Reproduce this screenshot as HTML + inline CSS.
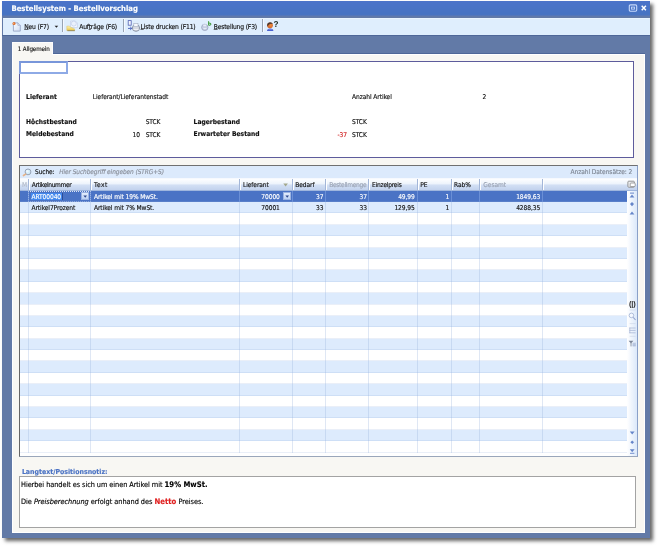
<!DOCTYPE html>
<html lang="de"><head><meta charset="utf-8"><title>Bestellsystem - Bestellvorschlag</title>
<style>
html,body{margin:0;padding:0;background:#fff;}
body{width:659px;height:547px;overflow:hidden;position:relative;font-family:"DejaVu Sans Condensed","Liberation Sans",sans-serif;font-size:6.6px;letter-spacing:-0.08px;color:#111;}
div,span{position:absolute;box-sizing:border-box;white-space:nowrap;}
.t{height:10px;line-height:10px;-webkit-text-stroke:0.14px;}
.t span,.t i,.t u,.t b{position:static;}
.t u{text-decoration-thickness:0.6px;text-underline-offset:0.4px;text-decoration-color:rgba(0,0,0,.55);}
.b{font-weight:bold;letter-spacing:0;}
#root{left:0;top:0;width:659px;height:547px;will-change:transform;filter:blur(0.35px);}
#win{left:2px;top:1.3px;width:648.4px;height:536.9px;background:#627aa7;box-shadow:3px 3px 3.6px rgba(0,0,0,.6);}
#title{left:2px;top:1.3px;width:648.4px;height:15.7px;background:linear-gradient(#4b73c9 0,#4673c2 13.4px,#5a78b4 15px,#627aa7 15.7px);}
#tb{left:3px;top:17.6px;width:647.4px;height:17.2px;background:#dfeefd;border-top:1px solid #e9f5ff;}
#tbline{left:2px;top:34.8px;width:648.4px;height:1px;background:#4e6798;}
#tab{left:12px;top:42.4px;width:41px;height:12.6px;background:#f8f7f3;border:1px solid #fdfdfd;border-bottom:none;}
#page{left:12px;top:54px;width:632.6px;height:478.8px;background:#f8f7f3;border:1px solid #fff;}
#pageline{left:53px;top:53.2px;width:592px;height:1px;background:#4e6798;}
#info{left:19.2px;top:61px;width:614.6px;height:96.6px;background:#fff;border:1px solid #5d5c9c;}
#inp{left:19.4px;top:61px;width:49px;height:12.8px;background:#fff;border:2px solid #8eaae6;border-top-color:#7896da;border-left-color:#7f9cde;}
#grid{left:19px;top:165.4px;width:619px;height:291.7px;background:#fff;border:1px solid #8aa0c8;border-bottom-color:#9aa6ba;border-left-color:#666;border-top-color:#707070}
#search{left:20px;top:166.4px;width:617px;height:11.6px;background:#dceafc;}
#hdr{left:20px;top:177.6px;width:617px;height:13px;background:linear-gradient(#fdfeff 0%,#eef4fc 42%,#d2dff4 56%,#c2d2ed 100%);border-top:1px solid #f6f9fe;border-bottom:1px solid #9fb6dd;}
#nav{left:626.6px;top:190.6px;width:10.4px;height:265.5px;background:linear-gradient(90deg,#fff,#dbe8fa);}
.row{left:20px;width:606.6px;}
.alt{background:#ddebfd;}
.sel{background:#4a73c5;}
.vl{width:1px;background:rgba(150,175,220,.3);top:202px;height:250.6px;}
.rl{left:20px;width:606.6px;height:1px;background:rgba(150,175,220,.2);}
.vs{width:1px;background:#6a8fd6;top:191px;height:11px;}
.hl{width:1px;background:#a3b6d8;top:179.4px;height:10.2px;box-shadow:1px 0 0 #fff;}
.dd{width:7.8px;height:8.2px;top:192.2px;background:linear-gradient(#e3edfc,#bcd1f4);border:0.6px solid #9cb4e2;}
#note{left:19.4px;top:476px;width:616.4px;height:51.6px;background:#fff;border:1px solid #a3a3a3;}
</style></head>
<body>
<div id="root">
<div id="win"></div><div id="title"></div><div id="tb"></div><div id="tbline"></div>
<div class="t b" style="top:4px;font-size:7.66px;left:11.4px;color:#fff;">Bestellsystem - Bestellvorschlag</div>
<svg style="position:absolute;left:628px;top:4.4px" width="20" height="9" viewBox="0 0 20 9"><rect x="1.3" y="0.9" width="7.4" height="6.4" rx="1.2" fill="none" stroke="#c6d8fa" stroke-width="1.1"/><rect x="3.5" y="3.1" width="3" height="2" fill="none" stroke="#c6d8fa" stroke-width="0.9"/><path d="M13.7 1.8 L17.9 6.2 M17.9 1.8 L13.7 6.2" stroke="#fff" stroke-width="1.5" fill="none"/></svg>
<div class="t" style="top:22px;font-size:6.7px;left:24.2px;letter-spacing:-0.16px;"><u>N</u>eu (F7)</div>
<div class="t" style="top:22px;font-size:6.7px;left:79.2px;letter-spacing:-0.16px;">Auf<u>t</u>räge (F6)</div>
<div class="t" style="top:22px;font-size:6.7px;left:140.5px;letter-spacing:-0.16px;"><u>L</u>iste drucken (F11)</div>
<div class="t" style="top:22px;font-size:6.7px;left:213.7px;letter-spacing:-0.16px;"><u>B</u>estellung (F3)</div>
<div style="left:61.7px;top:19px;width:1px;height:13px;background:#98a4b4;box-shadow:1px 0 0 #f4f9ff;"></div>
<div style="left:123.3px;top:19px;width:1px;height:13px;background:#98a4b4;box-shadow:1px 0 0 #f4f9ff;"></div>
<div style="left:262px;top:19px;width:1px;height:13px;background:#98a4b4;box-shadow:1px 0 0 #f4f9ff;"></div>
<svg style="position:absolute;left:54px;top:24.6px" width="5" height="4" viewBox="0 0 5 4"><path d="M0.6 0.8 H4.2 L2.4 2.8 Z" fill="#222"/></svg>
<svg style="position:absolute;left:0;top:16px" width="300" height="22" viewBox="0 16 300 22">
<defs><linearGradient id="pg" x1="0" y1="0" x2="1" y2="1"><stop offset="0" stop-color="#fbfdff"/><stop offset="1" stop-color="#cfdcf4"/></linearGradient>
<linearGradient id="fy" x1="0" y1="0" x2="0" y2="1"><stop offset="0" stop-color="#fcf3b4"/><stop offset="1" stop-color="#ecc94c"/></linearGradient>
<radialGradient id="fc" cx="0.6" cy="0.5" r="0.6"><stop offset="0" stop-color="#f08a3c"/><stop offset="1" stop-color="#c8602a"/></radialGradient></defs>
<path d="M13.4 22.9 H17.9 L20.3 25.3 V31.1 H13.4 Z" fill="url(#pg)" stroke="#8d9cbf" stroke-width="0.8"/>
<path d="M17.9 22.9 V25.3 H20.3" fill="#dfe8f8" stroke="#8d9cbf" stroke-width="0.6"/>
<circle cx="14" cy="23.6" r="1.5" fill="#e2702a"/><circle cx="13.7" cy="23.2" r="0.55" fill="#f8c9a0"/>
<path d="M70.6 21 H75.4 L77.4 23 V27.6 H70.6 Z" fill="#f3f7fe" stroke="#c3cfea" stroke-width="0.7"/>
<circle cx="73.8" cy="23.6" r="2.5" fill="#eaf1fd" stroke="#b9c6e6" stroke-width="0.6"/>
<path d="M66.8 26.1 H69.2 L70.2 26.9 L74.6 28.9 V30.4 H66.8 Z" fill="url(#fy)" stroke="#d8bb55" stroke-width="0.4"/>
<path d="M67.4 30.7 H74.9" stroke="#6a5a2a" stroke-width="0.6"/>
<rect x="128.2" y="20.6" width="3" height="4.6" fill="#f2f5fd" stroke="#5262b2" stroke-width="0.8"/>
<path d="M128 28.4 H131.6 M130.2 26.9 L131.8 28.4 L130.2 29.9" stroke="#3f58b8" stroke-width="0.9" fill="none"/>
<ellipse cx="136" cy="28" rx="3.6" ry="3.3" fill="#d6dae2" stroke="#767f92" stroke-width="0.8"/>
<rect x="133.8" y="23.4" width="4.2" height="3.2" fill="#f6f8fc" stroke="#a0aac0" stroke-width="0.6"/>
<path d="M133.4 29.6 H138.6" stroke="#f6f8fc" stroke-width="0.8"/>
<ellipse cx="204.8" cy="27.4" rx="3.2" ry="3.1" fill="#c6cfe4" stroke="#8f9ab6" stroke-width="0.7"/>
<rect x="203" y="24.2" width="3.6" height="2.6" fill="#e8edf8" stroke="#b4bfd8" stroke-width="0.5"/>
<path d="M203.4 28.6 H206.4" stroke="#eef2fa" stroke-width="0.9"/>
<path d="M208.6 21.2 V25.4 M208.6 23.4 Q210.2 22.4 211 23.8 Q211.2 25.6 208.8 25.3" fill="none" stroke="#3f9a3a" stroke-width="1"/>
<path d="M267 31 Q267 28.4 270.2 28.4 Q273.4 28.4 273.4 31 Z" fill="#4a62d0"/>
<path d="M268.4 29.4 H272" stroke="#8ea0ee" stroke-width="0.6"/>
<circle cx="270" cy="25.3" r="2.9" fill="url(#fc)"/>
<path d="M267.3 26.6 Q266.6 22.6 270 22.3 Q272.4 22.3 272.8 24 Q270 23.4 268.6 25 Z" fill="#4a3a32"/>
<text x="273.6" y="27" font-family="Liberation Sans, sans-serif" font-size="8.2" font-weight="bold" fill="#1c2c24">?</text>
</svg>
<div id="page"></div><div id="pageline"></div><div id="tab"></div>
<div class="t" style="top:44px;font-size:6.2px;left:17.8px;letter-spacing:-0.12px;">1 Allgemein</div>
<div id="info"></div><div id="inp"></div>
<div class="t b" style="top:92px;font-size:6.65px;left:26.1px;">Lieferant</div>
<div class="t" style="top:92px;font-size:6.6px;left:92.8px;">Lieferant/Lieferantenstadt</div>
<div class="t" style="top:92px;font-size:6.6px;left:352px;">Anzahl Artikel</div>
<div class="t" style="top:92px;font-size:6.6px;left:482.5px;">2</div>
<div class="t b" style="top:117px;font-size:6.65px;left:26.1px;">Höchstbestand</div>
<div class="t b" style="top:129px;font-size:6.65px;left:26.1px;">Meldebestand</div>
<div class="t" style="top:117px;font-size:6.6px;left:145.7px;">STCK</div>
<div class="t" style="top:130px;font-size:6.6px;left:145.7px;">STCK</div>
<div class="t" style="top:130px;font-size:6.6px;right:519px;">10</div>
<div class="t b" style="top:117px;font-size:6.65px;left:193.6px;">Lagerbestand</div>
<div class="t b" style="top:129px;font-size:6.65px;left:193.6px;">Erwarteter Bestand</div>
<div class="t" style="top:117px;font-size:6.6px;left:352px;">STCK</div>
<div class="t" style="top:130px;font-size:6.6px;left:352px;">STCK</div>
<div class="t" style="top:130px;font-size:6.6px;right:312px;color:#d02020;">-37</div>
<div id="grid"></div><div id="search"></div><div id="hdr"></div><div id="nav"></div>
<div class="row sel" style="top:190.60px;height:11.39px;"></div>
<div class="row alt" style="top:201.99px;height:11.39px;"></div>
<div class="row alt" style="top:224.77px;height:11.39px;"></div>
<div class="row alt" style="top:247.55px;height:11.39px;"></div>
<div class="row alt" style="top:270.33px;height:11.39px;"></div>
<div class="row alt" style="top:293.11px;height:11.39px;"></div>
<div class="row alt" style="top:315.89px;height:11.39px;"></div>
<div class="row alt" style="top:338.67px;height:11.39px;"></div>
<div class="row alt" style="top:361.45px;height:11.39px;"></div>
<div class="row alt" style="top:384.23px;height:11.39px;"></div>
<div class="row alt" style="top:407.01px;height:11.39px;"></div>
<div class="row alt" style="top:429.79px;height:11.39px;"></div>
<div class="rl" style="top:200.99px;"></div>
<div class="rl" style="top:212.38px;"></div>
<div class="rl" style="top:223.77px;"></div>
<div class="rl" style="top:235.16px;"></div>
<div class="rl" style="top:246.55px;"></div>
<div class="rl" style="top:257.94px;"></div>
<div class="rl" style="top:269.33px;"></div>
<div class="rl" style="top:280.72px;"></div>
<div class="rl" style="top:292.11px;"></div>
<div class="rl" style="top:303.50px;"></div>
<div class="rl" style="top:314.89px;"></div>
<div class="rl" style="top:326.28px;"></div>
<div class="rl" style="top:337.67px;"></div>
<div class="rl" style="top:349.06px;"></div>
<div class="rl" style="top:360.45px;"></div>
<div class="rl" style="top:371.84px;"></div>
<div class="rl" style="top:383.23px;"></div>
<div class="rl" style="top:394.62px;"></div>
<div class="rl" style="top:406.01px;"></div>
<div class="rl" style="top:417.40px;"></div>
<div class="rl" style="top:428.79px;"></div>
<div class="rl" style="top:440.18px;"></div>
<div class="rl" style="top:451.57px;"></div>
<div class="vl" style="left:27.8px;"></div>
<div class="vs" style="left:27.8px;"></div>
<div class="hl" style="left:27.8px;"></div>
<div class="vl" style="left:90.2px;"></div>
<div class="vs" style="left:90.2px;"></div>
<div class="hl" style="left:90.2px;"></div>
<div class="vl" style="left:238.8px;"></div>
<div class="vs" style="left:238.8px;"></div>
<div class="hl" style="left:238.8px;"></div>
<div class="vl" style="left:291.7px;"></div>
<div class="vs" style="left:291.7px;"></div>
<div class="hl" style="left:291.7px;"></div>
<div class="vl" style="left:325.3px;"></div>
<div class="vs" style="left:325.3px;"></div>
<div class="hl" style="left:325.3px;"></div>
<div class="vl" style="left:368.3px;"></div>
<div class="vs" style="left:368.3px;"></div>
<div class="hl" style="left:368.3px;"></div>
<div class="vl" style="left:416.5px;"></div>
<div class="vs" style="left:416.5px;"></div>
<div class="hl" style="left:416.5px;"></div>
<div class="vl" style="left:450.5px;"></div>
<div class="vs" style="left:450.5px;"></div>
<div class="hl" style="left:450.5px;"></div>
<div class="vl" style="left:479.1px;"></div>
<div class="vs" style="left:479.1px;"></div>
<div class="hl" style="left:479.1px;"></div>
<div class="vl" style="left:541.6px;"></div>
<div class="vs" style="left:541.6px;"></div>
<div class="hl" style="left:541.6px;"></div>
<svg style="position:absolute;left:22px;top:167.5px" width="10" height="10" viewBox="0 0 10 10">
<circle cx="6" cy="3.9" r="2.9" fill="#d3ecf9" stroke="#8690a4" stroke-width="0.8"/><circle cx="5.4" cy="3.2" r="1.2" fill="#eef8fd"/><path d="M3.6 6.1 L1.5 7.5" stroke="#e6b388" stroke-width="1.7" stroke-linecap="round"/></svg>
<div class="t" style="top:167px;font-size:6.5px;left:35px;">Suche:</div>
<div class="t" style="top:167px;font-size:6.5px;left:59.2px;color:#8a8f9a;font-style:italic;">Hier Suchbegriff eingeben (STRG+S)</div>
<div class="t" style="top:167px;font-size:6.6px;right:26.8px;color:#7f8794;">Anzahl Datensätze: 2</div>
<div class="t" style="top:180px;font-size:6.6px;left:22px;color:#b4bccb;">M</div>
<div class="t" style="top:180px;font-size:6.6px;left:31.8px;letter-spacing:-0.36px;">Artikelnummer</div>
<div class="t" style="top:180px;font-size:6.6px;left:94px;letter-spacing:0.45px;">Text</div>
<div class="t" style="top:180px;font-size:6.6px;left:243px;">Lieferant</div>
<div class="t" style="top:180px;font-size:6.6px;left:295.3px;">Bedarf</div>
<div class="t" style="top:180px;font-size:6.6px;left:329.2px;color:#9aa3b4;letter-spacing:-0.3px;">Bestellmenge</div>
<div class="t" style="top:180px;font-size:6.6px;left:372px;letter-spacing:-0.22px;">Einzelpreis</div>
<div class="t" style="top:180px;font-size:6.6px;left:420.2px;">PE</div>
<div class="t" style="top:180px;font-size:6.6px;left:454px;">Rab%</div>
<div class="t" style="top:180px;font-size:6.6px;left:483.3px;color:#9aa3b4;">Gesamt</div>
<svg style="position:absolute;left:283.4px;top:183.2px" width="6" height="5" viewBox="0 0 6 5"><path d="M0.3 0.5 H4.9 L2.6 3.6 Z" fill="#a3a78c"/></svg>
<div style="left:28.4px;top:190.6px;width:62.4px;height:11.4px;border:1px dotted rgba(255,255,255,.3);border-top-color:rgba(255,255,255,.8);"></div>
<div style="left:31px;top:193px;width:31px;height:6.6px;background:#4288ee;"></div>
<div style="left:62px;top:193px;width:1px;height:6.6px;background:#2e4c94;"></div>
<div class="t" style="top:192px;font-size:6.6px;left:31.5px;color:#fff;">ART00040</div>
<div class="dd" style="left:81.4px;"></div>
<svg style="position:absolute;left:83.2px;top:195px" width="5" height="4" viewBox="0 0 5 4"><path d="M0.4 0.5 H4 L2.2 2.7 Z" fill="#2c468c"/></svg>
<div class="t" style="top:192px;font-size:6.6px;left:94px;color:#fff;">Artikel mit 19% MwSt.</div>
<div class="t" style="top:192px;font-size:6.6px;right:379.2px;color:#fff;">70000</div>
<div class="dd" style="left:282.8px;"></div>
<svg style="position:absolute;left:284.6px;top:195px" width="5" height="4" viewBox="0 0 5 4"><path d="M0.4 0.5 H4 L2.2 2.7 Z" fill="#2c468c"/></svg>
<div class="t" style="top:192px;font-size:6.6px;right:335.6px;color:#fff;">37</div>
<div class="t" style="top:192px;font-size:6.6px;right:292px;color:#fff;">37</div>
<div class="t" style="top:192px;font-size:6.6px;right:244.3px;color:#fff;">49,99</div>
<div class="t" style="top:192px;font-size:6.6px;right:209.7px;color:#fff;">1</div>
<div class="t" style="top:192px;font-size:6.6px;right:118.9px;color:#fff;">1849,63</div>
<div class="t" style="top:203px;font-size:6.6px;left:31.5px;">Artikel7Prozent</div>
<div class="t" style="top:203px;font-size:6.6px;left:94px;">Artikel mit 7% MwSt.</div>
<div class="t" style="top:203px;font-size:6.6px;right:379.2px;">70001</div>
<div class="t" style="top:203px;font-size:6.6px;right:335.6px;">33</div>
<div class="t" style="top:203px;font-size:6.6px;right:292px;">33</div>
<div class="t" style="top:203px;font-size:6.6px;right:244.3px;">129,95</div>
<div class="t" style="top:203px;font-size:6.6px;right:209.7px;">1</div>
<div class="t" style="top:203px;font-size:6.6px;right:118.9px;">4288,35</div>
<svg style="position:absolute;left:627px;top:178px" width="11" height="278" viewBox="0 0 11 278">
<rect x="0.9" y="3.2" width="6.4" height="6" rx="0.8" fill="#eef0f3" stroke="#8a8a8a" stroke-width="0.9"/><rect x="3.2" y="5" width="5" height="3.6" rx="0.8" fill="#fff" stroke="#8a8a8a" stroke-width="0.8"/>
<path d="M3 15.1 H7" stroke="#6585c9" stroke-width="1"/><path d="M5 16.6 L7.4 19.4 H2.6 Z" fill="#6585c9"/>
<path d="M5 24 L7 26.1 L5 28.2 L3 26.1 Z" fill="#6585c9"/>
<path d="M5 33.6 L7.4 36.4 H2.6 Z" fill="#6585c9"/>
<text x="1.9" y="127.6" font-family="Liberation Sans, sans-serif" font-size="6.6" font-weight="bold" fill="#2a2a2a" textLength="6.8" lengthAdjust="spacingAndGlyphs">(|)</text>
<path d="M2.7 132 H8.6 M2.7 145.6 H8.6 M2.7 158.3 H8.6" stroke="#c9d3e6" stroke-width="0.6"/>
<circle cx="4.4" cy="137.4" r="2.3" fill="#f4f8ff" stroke="#9eaed0" stroke-width="0.8"/><path d="M6.2 139.4 L8.6 142" stroke="#93a4cc" stroke-width="1.1"/>
<path d="M2.4 150 H8.6 M2.4 152.4 H8.6 M2.4 154.8 H8.6 M2.8 149.6 V155.2" stroke="#a9b7d6" stroke-width="0.8"/>
<path d="M1.6 162.8 H6.4 L4 165.6 Z" fill="#7a8496"/><path d="M4 165 V168.4" stroke="#7a8496" stroke-width="0.8"/><path d="M5.6 164.6 H8.8 V168.6 H5.6 Z" fill="#c4cfe6"/><path d="M5.6 166 H8.8 M5.6 167.4 H8.8" stroke="#9fb0d2" stroke-width="0.5"/>
<path d="M5.2 256.4 L7.6 253.4 H2.8 Z" fill="#6585c9"/>
<path d="M5.2 262.4 L7 264.2 L5.2 266 L3.4 264.2 Z" fill="#6585c9"/>
<path d="M5.2 274.2 L7.6 271.2 H2.8 Z" fill="#6585c9"/><path d="M3 275.3 H7.4" stroke="#6585c9" stroke-width="0.9"/>
</svg>
<div class="t b" style="top:467px;font-size:6.93px;left:21.9px;color:#4a72c4;">Langtext/Positionsnotiz:</div>
<div id="note"></div>
<div class="t" style="top:480px;font-size:7.3px;left:21px;color:#000;letter-spacing:-0.06px;">Hierbei handelt es sich um einen Artikel mit <span class="b" style="font-size:7.7px;">19% MwSt.</span></div>
<div class="t" style="top:497px;font-size:7.3px;left:21px;color:#000;letter-spacing:-0.03px;">Die <i>Preisberechnung</i> erfolgt anhand des <span class="b" style="font-size:7.7px;color:#e02020;">Netto</span> Preises.</div>
</div>
</body></html>
